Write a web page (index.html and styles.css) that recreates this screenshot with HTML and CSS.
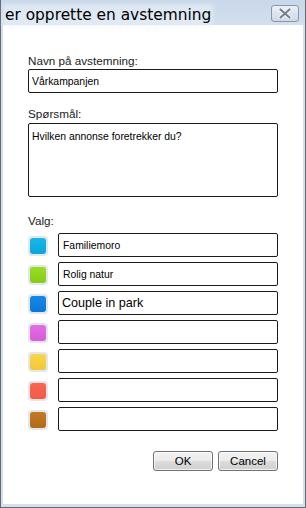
FILE: index.html
```html
<!DOCTYPE html>
<html lang="no">
<head>
<meta charset="utf-8">
<title>Opprett avstemning</title>
<link rel="stylesheet" href="styles.css">
</head>
<body>
<div class="window">
  <div class="titlebar">
    <span class="title">er opprette en avstemning</span>
    <span class="close">
      <svg width="14" height="11" viewBox="0 0 14 11">
        <path d="M2.5 1.5 L11.5 9.5 M11.5 1.5 L2.5 9.5" stroke="#f4f6f9" stroke-width="4.2" stroke-linecap="round" fill="none"/>
        <path d="M2.5 1.5 L11.5 9.5 M11.5 1.5 L2.5 9.5" stroke="#75808d" stroke-width="2.2" stroke-linecap="round" fill="none"/>
      </svg>
    </span>
  </div>
  <div class="content">
    <div class="label first">Navn på avstemning:</div>
    <div class="field single">Vårkampanjen</div>
    <div class="label">Spørsmål:</div>
    <div class="field area">Hvilken annonse foretrekker du?</div>
    <div class="label">Valg:</div>
    <div class="choices">
      <div class="choice"><span class="swatch"><span class="chip c1"></span></span><div class="field opt">Familiemoro</div></div>
      <div class="choice"><span class="swatch"><span class="chip c2"></span></span><div class="field opt">Rolig natur</div></div>
      <div class="choice"><span class="swatch"><span class="chip c3"></span></span><div class="field opt big">Couple in park</div></div>
      <div class="choice"><span class="swatch"><span class="chip c4"></span></span><div class="field opt"></div></div>
      <div class="choice"><span class="swatch"><span class="chip c5"></span></span><div class="field opt"></div></div>
      <div class="choice"><span class="swatch"><span class="chip c6"></span></span><div class="field opt"></div></div>
      <div class="choice"><span class="swatch"><span class="chip c7"></span></span><div class="field opt"></div></div>
    </div>
    <div class="buttons">
      <span class="btn">OK</span>
      <span class="btn">Cancel</span>
    </div>
  </div>
</div>
</body>
</html>
```
FILE: styles.css
```css
* { box-sizing: border-box; }
html, body { margin: 0; padding: 0; }
body { width: 306px; height: 508px; overflow: hidden; background: #fff; }

.window {
  width: 306px;
  height: 508px;
  border: 1px solid #5e6a76;
  border-top: none;
  background: #d6e0ec;
  padding: 0 2px 3px 2px;
  display: flex;
  flex-direction: column;
}

.titlebar {
  height: 25px;
  flex: none;
  margin: 0 -2px;
  padding: 0 0 0 4px;
  background: linear-gradient(#c9d8ea, #cfdcec 60%, #d3dfee);
  display: flex;
  align-items: flex-start;
  position: relative;
}
.title {
  font-family: "DejaVu Sans", Verdana, sans-serif;
  font-size: 15.4px;
  line-height: 18px;
  margin-top: 6px;
  color: #000;
  background: rgba(236, 242, 249, 0.55);
  box-shadow: 0 0 4px 2px rgba(236, 242, 249, 0.55);
  height: 19px;
}
.close {
  position: absolute;
  right: 6px;
  top: 5px;
  width: 28px;
  height: 17px;
  border: 1px solid #8796aa;
  border-radius: 3px;
  background: linear-gradient(#eef2f7, #dbe3ed 50%, #cfd9e5);
  display: flex;
  align-items: center;
  justify-content: center;
}

.content {
  flex: 1;
  background: #fff;
  padding: 29px 25px 0 25px;
  display: flex;
  flex-direction: column;
  font-family: "Liberation Sans", Arial, sans-serif;
}

.label {
  font-size: 11.7px;
  line-height: 14px;
  height: 14px;
  color: #1a1a1a;
  margin-top: 14px;
}
.label.first { margin-top: 0; }

.field {
  border: 1px solid #1a1a1a;
  border-radius: 2px;
  background: #fff;
  font-size: 10.4px;
  color: #000;
}
.field.single {
  height: 24px;
  margin-top: 1px;
  padding: 2px 0 0 3px;
  line-height: 20px;
}
.field.area {
  height: 74px;
  margin-top: 2px;
  padding: 6px 0 0 3px;
  line-height: 13px;
}
.area + .label { margin-top: 17px; }

.choices {
  margin-top: 5px;
  display: flex;
  flex-direction: column;
  gap: 5px;
}
.choice {
  display: flex;
  align-items: center;
  gap: 10px;
  height: 24px;
}
.swatch {
  width: 20px;
  height: 20px;
  border-radius: 4px;
  background: #e3e6eb;
  display: flex;
  align-items: center;
  justify-content: center;
  flex: none;
  margin-top: 1px;
}
.chip {
  width: 16px;
  height: 16px;
  border-radius: 3px;
}
.c1 { background: linear-gradient(#1ab8e6, #0aa6d8); }
.c2 { background: linear-gradient(#99dc22, #86cc18); }
.c3 { background: linear-gradient(#1888e6, #0a76d6); }
.c4 { background: linear-gradient(#e36ce6, #d55cda); }
.c5 { background: linear-gradient(#f8d64a, #f2c83a); }
.c6 { background: linear-gradient(#fa6650, #f35a46); }
.c7 { background: linear-gradient(#c27a22, #b06a1c); }

.field.opt {
  flex: 1;
  height: 24px;
  padding: 1px 0 0 4px;
  line-height: 21px;
}
.field.opt.big {
  font-size: 12.6px;
  padding-left: 3px;
}

.buttons {
  margin-top: 20px;
  display: flex;
  justify-content: flex-end;
  gap: 5px;
}
.btn {
  width: 60px;
  height: 20px;
  border: 1px solid #707070;
  border-radius: 3px;
  background: linear-gradient(#f3f3f3, #ebebeb 50%, #dddddd 51%, #cfcfcf);
  box-shadow: inset 0 0 0 1px rgba(255,255,255,0.7);
  font-size: 11.5px;
  line-height: 18px;
  text-align: center;
  color: #000;
}
```
